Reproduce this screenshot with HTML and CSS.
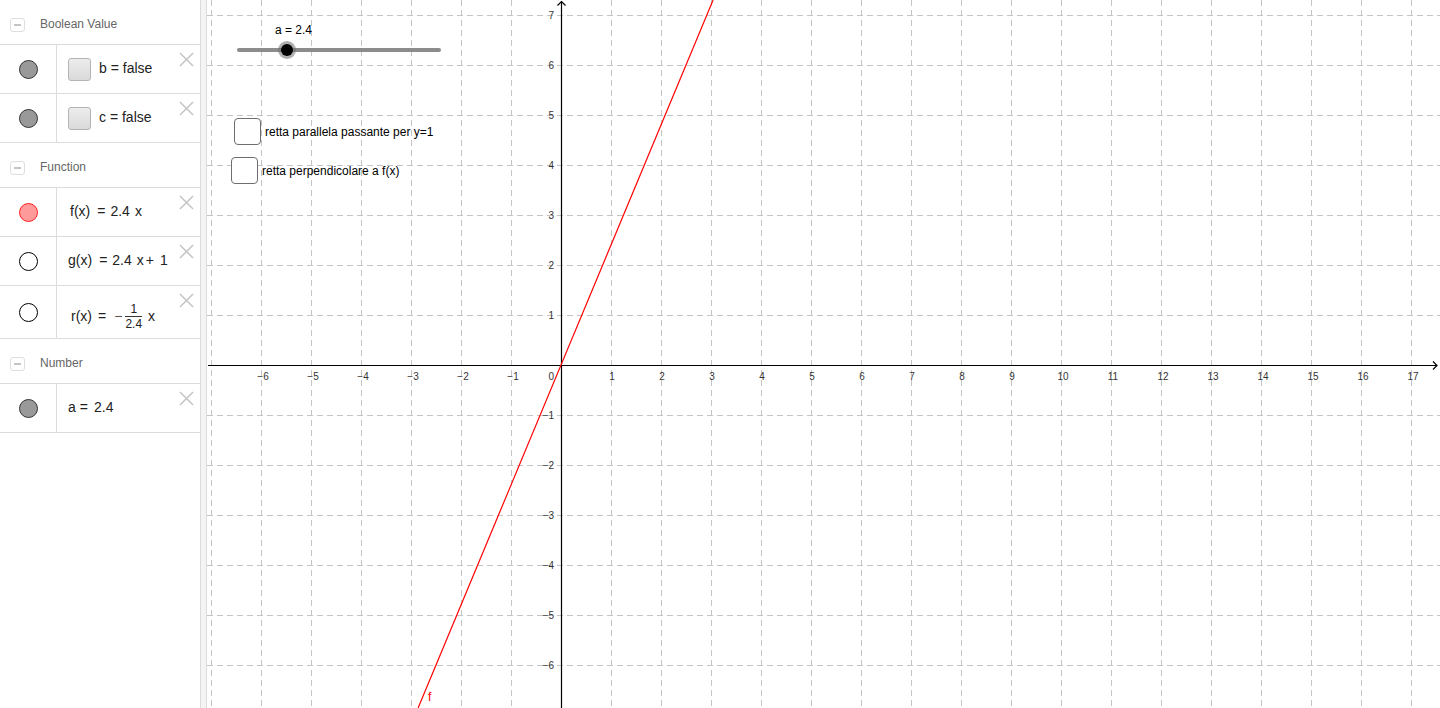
FILE: index.html
```html
<!DOCTYPE html>
<html>
<head>
<meta charset="utf-8">
<link rel="stylesheet" href="styles.css">
</head>
<body>
<div class="app">
  <div class="panel">
    <div class="group-header"><span class="collapse"></span><span class="group-title">Boolean Value</span></div>
    <div class="row">
      <div class="marker"><span class="dot dot-gray"></span></div>
      <div class="content"><span class="bool-box"></span><span class="expr">b = false</span></div>
      <svg class="del" viewBox="0 0 16 16"><path d="M1 1 L15 15 M15 1 L1 15"/></svg>
    </div>
    <div class="row">
      <div class="marker"><span class="dot dot-gray"></span></div>
      <div class="content"><span class="bool-box"></span><span class="expr">c = false</span></div>
      <svg class="del" viewBox="0 0 16 16"><path d="M1 1 L15 15 M15 1 L1 15"/></svg>
    </div>
    <div class="group-header"><span class="collapse"></span><span class="group-title">Function</span></div>
    <div class="row">
      <div class="marker"><span class="dot dot-red"></span></div>
      <div class="content math"><span>f(x)</span><span class="eq">=</span><span>2.4</span><span class="var">x</span></div>
      <svg class="del" viewBox="0 0 16 16"><path d="M1 1 L15 15 M15 1 L1 15"/></svg>
    </div>
    <div class="row">
      <div class="marker"><span class="dot dot-white"></span></div>
      <div class="content math math-g"><span>g(x)</span><span class="eq">=</span><span>2.4</span><span class="var">x</span><span class="op">+</span><span>1</span></div>
      <svg class="del" viewBox="0 0 16 16"><path d="M1 1 L15 15 M15 1 L1 15"/></svg>
    </div>
    <div class="row row-tall">
      <div class="marker"><span class="dot dot-white"></span></div>
      <div class="content math math-frac"><span>r(x)</span><span class="eq">=</span><span class="minus">−</span><span class="frac"><span class="num">1</span><span class="den">2.4</span></span><span class="var">x</span></div>
      <svg class="del" viewBox="0 0 16 16"><path d="M1 1 L15 15 M15 1 L1 15"/></svg>
    </div>
    <div class="group-header"><span class="collapse"></span><span class="group-title">Number</span></div>
    <div class="row">
      <div class="marker"><span class="dot dot-gray"></span></div>
      <div class="content math math-a"><span>a</span><span class="eq">=</span><span>2.4</span></div>
      <svg class="del" viewBox="0 0 16 16"><path d="M1 1 L15 15 M15 1 L1 15"/></svg>
    </div>
  </div>
  <div class="splitter"></div>
  <div class="graph">
    <svg class="plot" width="1233" height="708" viewBox="207 0 1233 708">
      <g class="grid">
        <line x1="211.5" y1="0" x2="211.5" y2="708"/><line x1="261.5" y1="0" x2="261.5" y2="708"/><line x1="311.5" y1="0" x2="311.5" y2="708"/><line x1="361.5" y1="0" x2="361.5" y2="708"/><line x1="411.5" y1="0" x2="411.5" y2="708"/><line x1="461.5" y1="0" x2="461.5" y2="708"/><line x1="511.5" y1="0" x2="511.5" y2="708"/><line x1="611.5" y1="0" x2="611.5" y2="708"/><line x1="661.5" y1="0" x2="661.5" y2="708"/><line x1="711.5" y1="0" x2="711.5" y2="708"/><line x1="761.5" y1="0" x2="761.5" y2="708"/><line x1="811.5" y1="0" x2="811.5" y2="708"/><line x1="861.5" y1="0" x2="861.5" y2="708"/><line x1="911.5" y1="0" x2="911.5" y2="708"/><line x1="961.5" y1="0" x2="961.5" y2="708"/><line x1="1011.5" y1="0" x2="1011.5" y2="708"/><line x1="1061.5" y1="0" x2="1061.5" y2="708"/><line x1="1111.5" y1="0" x2="1111.5" y2="708"/><line x1="1161.5" y1="0" x2="1161.5" y2="708"/><line x1="1211.5" y1="0" x2="1211.5" y2="708"/><line x1="1261.5" y1="0" x2="1261.5" y2="708"/><line x1="1311.5" y1="0" x2="1311.5" y2="708"/><line x1="1361.5" y1="0" x2="1361.5" y2="708"/><line x1="1411.5" y1="0" x2="1411.5" y2="708"/>
        <line x1="207" y1="15.5" x2="1440" y2="15.5"/><line x1="207" y1="65.5" x2="1440" y2="65.5"/><line x1="207" y1="115.5" x2="1440" y2="115.5"/><line x1="207" y1="165.5" x2="1440" y2="165.5"/><line x1="207" y1="215.5" x2="1440" y2="215.5"/><line x1="207" y1="265.5" x2="1440" y2="265.5"/><line x1="207" y1="315.5" x2="1440" y2="315.5"/><line x1="207" y1="415.5" x2="1440" y2="415.5"/><line x1="207" y1="465.5" x2="1440" y2="465.5"/><line x1="207" y1="515.5" x2="1440" y2="515.5"/><line x1="207" y1="565.5" x2="1440" y2="565.5"/><line x1="207" y1="615.5" x2="1440" y2="615.5"/><line x1="207" y1="665.5" x2="1440" y2="665.5"/>
      </g>
      <g class="axes">
        <line x1="208" y1="365.5" x2="1437" y2="365.5"/>
        <line x1="561.5" y1="1.5" x2="561.5" y2="708"/>
        <path d="M1433 361.5 L1437 365.5 L1433 369.5"/>
        <path d="M557.5 5.5 L561.5 1.5 L565.5 5.5"/>
      </g>
      <g class="xlabels">
        <text x="263" y="380">−6</text><text x="313" y="380">−5</text><text x="363" y="380">−4</text><text x="413" y="380">−3</text><text x="463" y="380">−2</text><text x="513" y="380">−1</text><text x="612" y="380">1</text><text x="662" y="380">2</text><text x="712" y="380">3</text><text x="762" y="380">4</text><text x="812" y="380">5</text><text x="862" y="380">6</text><text x="912" y="380">7</text><text x="962" y="380">8</text><text x="1012" y="380">9</text><text x="1063" y="380">10</text><text x="1113" y="380">11</text><text x="1163" y="380">12</text><text x="1213" y="380">13</text><text x="1263" y="380">14</text><text x="1313" y="380">15</text><text x="1363" y="380">16</text><text x="1413" y="380">17</text>
      </g>
      <g class="ylabels">
        <text x="554" y="380">0</text>
        <text x="554" y="18.5">7</text><text x="554" y="68.5">6</text><text x="554" y="118.5">5</text><text x="554" y="168.5">4</text><text x="554" y="218.5">3</text><text x="554" y="268.5">2</text><text x="554" y="318.5">1</text><text x="554" y="418.5">−1</text><text x="554" y="468.5">−2</text><text x="554" y="518.5">−3</text><text x="554" y="568.5">−4</text><text x="554" y="618.5">−5</text><text x="554" y="668.5">−6</text>
      </g>
      <line class="fline" x1="713.1" y1="0" x2="418.1" y2="708"/>
      <text class="flabel" x="428" y="701">f</text>
    </svg>

    <div class="slider">
      <div class="slider-label">a = 2.4</div>
      <div class="slider-track"></div>
      <div class="slider-knob"><span class="knob-core"></span></div>
    </div>

    <div class="check check-1"><span class="check-box"></span><span class="check-label">retta parallela passante per y=1</span></div>
    <div class="check check-2"><span class="check-box"></span><span class="check-label">retta perpendicolare a f(x)</span></div>
  </div>
</div>
</body>
</html>
```

FILE: styles.css
```css
html, body {
  margin: 0;
  padding: 0;
  background: #ffffff;
  overflow: hidden;
}

.app {
  display: flex;
  width: 1440px;
  height: 708px;
  font-family: "Liberation Sans", Arial, sans-serif;
}

.panel {
  width: 201px;
  flex: none;
  box-sizing: border-box;
  border-right: 1px solid #dcdcdc;
  display: flex;
  flex-direction: column;
}

.splitter {
  width: 6px;
  flex: none;
  box-sizing: border-box;
  background: #f4f4f4;
  border-right: 1px solid #dcdcdc;
}

.graph {
  flex: 1;
  position: relative;
  overflow: hidden;
}

/* ---------- algebra panel ---------- */
.group-header {
  height: 44px;
  box-sizing: content-box;
  border-bottom: 1px solid #dcdcdc;
  display: flex;
  align-items: center;
  padding-left: 10px;
  flex: none;
}

.collapse {
  width: 15px;
  height: 14px;
  box-sizing: border-box;
  border: 1px solid #dedede;
  border-radius: 3px;
  position: relative;
  margin-top: 6px;
}

.collapse::after {
  content: "";
  position: absolute;
  left: 3px;
  right: 3px;
  top: 5px;
  height: 1.5px;
  background: #c4c4c4;
}

.group-title {
  margin-left: 15px;
  margin-top: 4px;
  font-size: 12px;
  color: #666666;
}

.row {
  height: 48px;
  border-bottom: 1px solid #dcdcdc;
  display: flex;
  position: relative;
  flex: none;
}

.row-tall {
  height: 52px;
}

.marker {
  width: 57px;
  box-sizing: border-box;
  border-right: 1px solid #dcdcdc;
  display: flex;
  align-items: center;
  justify-content: center;
}

.dot {
  width: 19px;
  height: 19px;
  box-sizing: border-box;
  border-radius: 50%;
}

.dot-gray {
  background: #999999;
  border: 1px solid #333333;
}

.dot-red {
  background: #ff9a9a;
  border: 1px solid #ff2020;
}

.dot-white {
  background: #ffffff;
  border: 1.3px solid #000000;
}

.content {
  display: flex;
  align-items: center;
  padding-left: 11px;
  font-size: 14px;
  color: #222222;
}

.bool-box {
  width: 23px;
  height: 23px;
  box-sizing: border-box;
  border: 1px solid #b4b4b4;
  border-radius: 3px;
  background: linear-gradient(#ececec, #dadada);
  margin-right: 8px;
  margin-top: 1px;
}

.expr {
  margin-bottom: 3px;
}

.math {
  padding-left: 13px;
  padding-bottom: 2px;
  font-size: 14px;
}

.math .eq {
  margin: 0 5px 0 7px;
}

.math .var {
  margin-left: 5px;
}

.math .op {
  margin: 0 6px 0 2px;
}

.math-g {
  padding-left: 11px;
}

.math-a {
  padding-left: 11px;
}

.math-a .eq {
  margin: 0 6px 0 4px;
}

.math-frac {
  padding-top: 8px;
  padding-left: 14px;
  padding-bottom: 0;
}

.math-frac .eq {
  margin: 0 4px 0 6px;
}

.minus {
  margin: 0 3px 0 4px;
  color: #555555;
}

.frac {
  display: inline-flex;
  flex-direction: column;
  align-items: center;
  font-size: 12px;
  line-height: 14px;
}

.frac .num {
  border-bottom: 1px solid #333333;
  padding: 0 1px;
  align-self: stretch;
  text-align: center;
}

.math-frac .var {
  margin-left: 6px;
}

.del {
  position: absolute;
  right: 6px;
  top: 7px;
  width: 15px;
  height: 15px;
}

.del path {
  stroke: #c4c4c4;
  stroke-width: 1.6;
  fill: none;
}

/* ---------- graphics ---------- */
.plot {
  display: block;
}

.grid line {
  stroke: #c4c4c4;
  stroke-width: 1;
  stroke-dasharray: 6 4;
}

.axes line, .axes path {
  stroke: #000000;
  stroke-width: 1.2;
  fill: none;
}

.xlabels text, .ylabels text {
  font-family: "Liberation Sans", Arial, sans-serif;
  font-size: 10px;
  fill: #333333;
}

.xlabels text {
  text-anchor: middle;
}

.ylabels text {
  text-anchor: end;
}

.fline {
  stroke: #ff0000;
  stroke-width: 1.2;
}

.flabel {
  font-family: "Liberation Sans", Arial, sans-serif;
  font-size: 12px;
  fill: #ff0000;
}

.slider {
  position: absolute;
  left: 30px;
  top: 24px;
  width: 204px;
  height: 36px;
}

.slider-label {
  position: absolute;
  left: 38px;
  top: 0;
  font-size: 12px;
  line-height: 12px;
  color: #000000;
}

.slider-track {
  position: absolute;
  left: 0;
  top: 23.5px;
  width: 204px;
  height: 4px;
  border-radius: 2px;
  background: #8c8c8c;
}

.slider-knob {
  position: absolute;
  left: 41px;
  top: 16.5px;
  width: 18px;
  height: 18px;
  border-radius: 50%;
  background: rgba(110, 110, 110, 0.55);
  display: flex;
  align-items: center;
  justify-content: center;
}

.knob-core {
  width: 12px;
  height: 12px;
  border-radius: 50%;
  background: #000000;
}

.check {
  position: absolute;
  display: flex;
  align-items: center;
  gap: 4px;
}

.check-1 {
  left: 27px;
  top: 118px;
}

.check-2 {
  left: 24px;
  top: 157px;
}

.check-box {
  width: 27px;
  height: 27px;
  box-sizing: border-box;
  border: 1.5px solid #6e6e6e;
  border-radius: 4px;
  background: #ffffff;
}

.check-label {
  font-size: 12px;
  color: #000000;
}
```
